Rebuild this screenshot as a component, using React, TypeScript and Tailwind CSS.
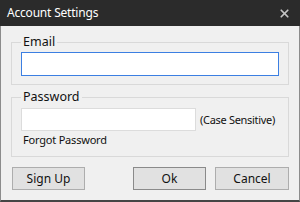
import { X } from 'lucide-react'

export default function App() {
  return (
    <div
      className="w-[300px] h-[202px] flex flex-col bg-[#f0f0f0] text-[#000] overflow-hidden"
      style={{ fontFamily: '"Noto Sans", "Open Sans", sans-serif' }}
    >
      {/* Title bar */}
      <div className="h-[26px] bg-[#2b2b2b] flex items-center justify-between pl-[7px] pr-[9px] shrink-0">
        <span className="text-white text-[12px] tracking-[-0.2px] leading-none">Account Settings</span>
        <X className="w-[13px] h-[13px] text-[#c4c4c4]" strokeWidth={3.2} />
      </div>

      {/* Body */}
      <div className="flex-1 flex flex-col border-l border-r border-[#8c8c8c] border-b-2 border-b-[#454545] px-[10px] pt-[8px]">
        <fieldset className="border border-[#d9d9d9] pl-[9px] pr-[8px] pt-[2px] pb-[8px] m-0">
          <legend className="px-[2px] text-[12.5px] leading-[16px] text-[#111]">Email</legend>
          <input
            type="text"
            className="block w-[258px] h-[24px] bg-white border border-[#3c7fe2] outline-none"
          />
        </fieldset>

        <fieldset className="border border-[#d9d9d9] pl-[9px] pr-[8px] pt-[3px] pb-[8px] mt-[4px]">
          <legend className="px-[2px] text-[12.5px] leading-[16px] text-[#111]">Password</legend>
          <div className="flex items-center">
            <input
              type="password"
              className="block w-[175px] h-[23px] bg-white border border-[#dcdcdc] outline-none"
            />
            <span className="ml-[4px] whitespace-nowrap text-[11px] tracking-[-0.3px] leading-none text-[#111]">
              (Case Sensitive)
            </span>
          </div>
          <div className="mt-[1px] pl-[2px] whitespace-nowrap text-[11px] tracking-[-0.2px] leading-[16px] text-[#111]">
            Forgot Password
          </div>
        </fieldset>

        <div className="flex items-center mt-[10px] pl-[1px]">
          <button className="w-[73px] h-[23px] bg-[#e1e1e1] border border-[#adadad] text-[12px] leading-none text-[#111]">
            Sign Up
          </button>
          <div className="flex-1" />
          <button className="w-[73px] h-[23px] bg-[#e1e1e1] border border-[#8a8a8a] text-[12px] leading-none text-[#111]">
            Ok
          </button>
          <button className="ml-[9px] w-[74px] h-[23px] bg-[#e1e1e1] border border-[#adadad] text-[12px] leading-none text-[#111]">
            Cancel
          </button>
        </div>
      </div>
    </div>
  )
}
